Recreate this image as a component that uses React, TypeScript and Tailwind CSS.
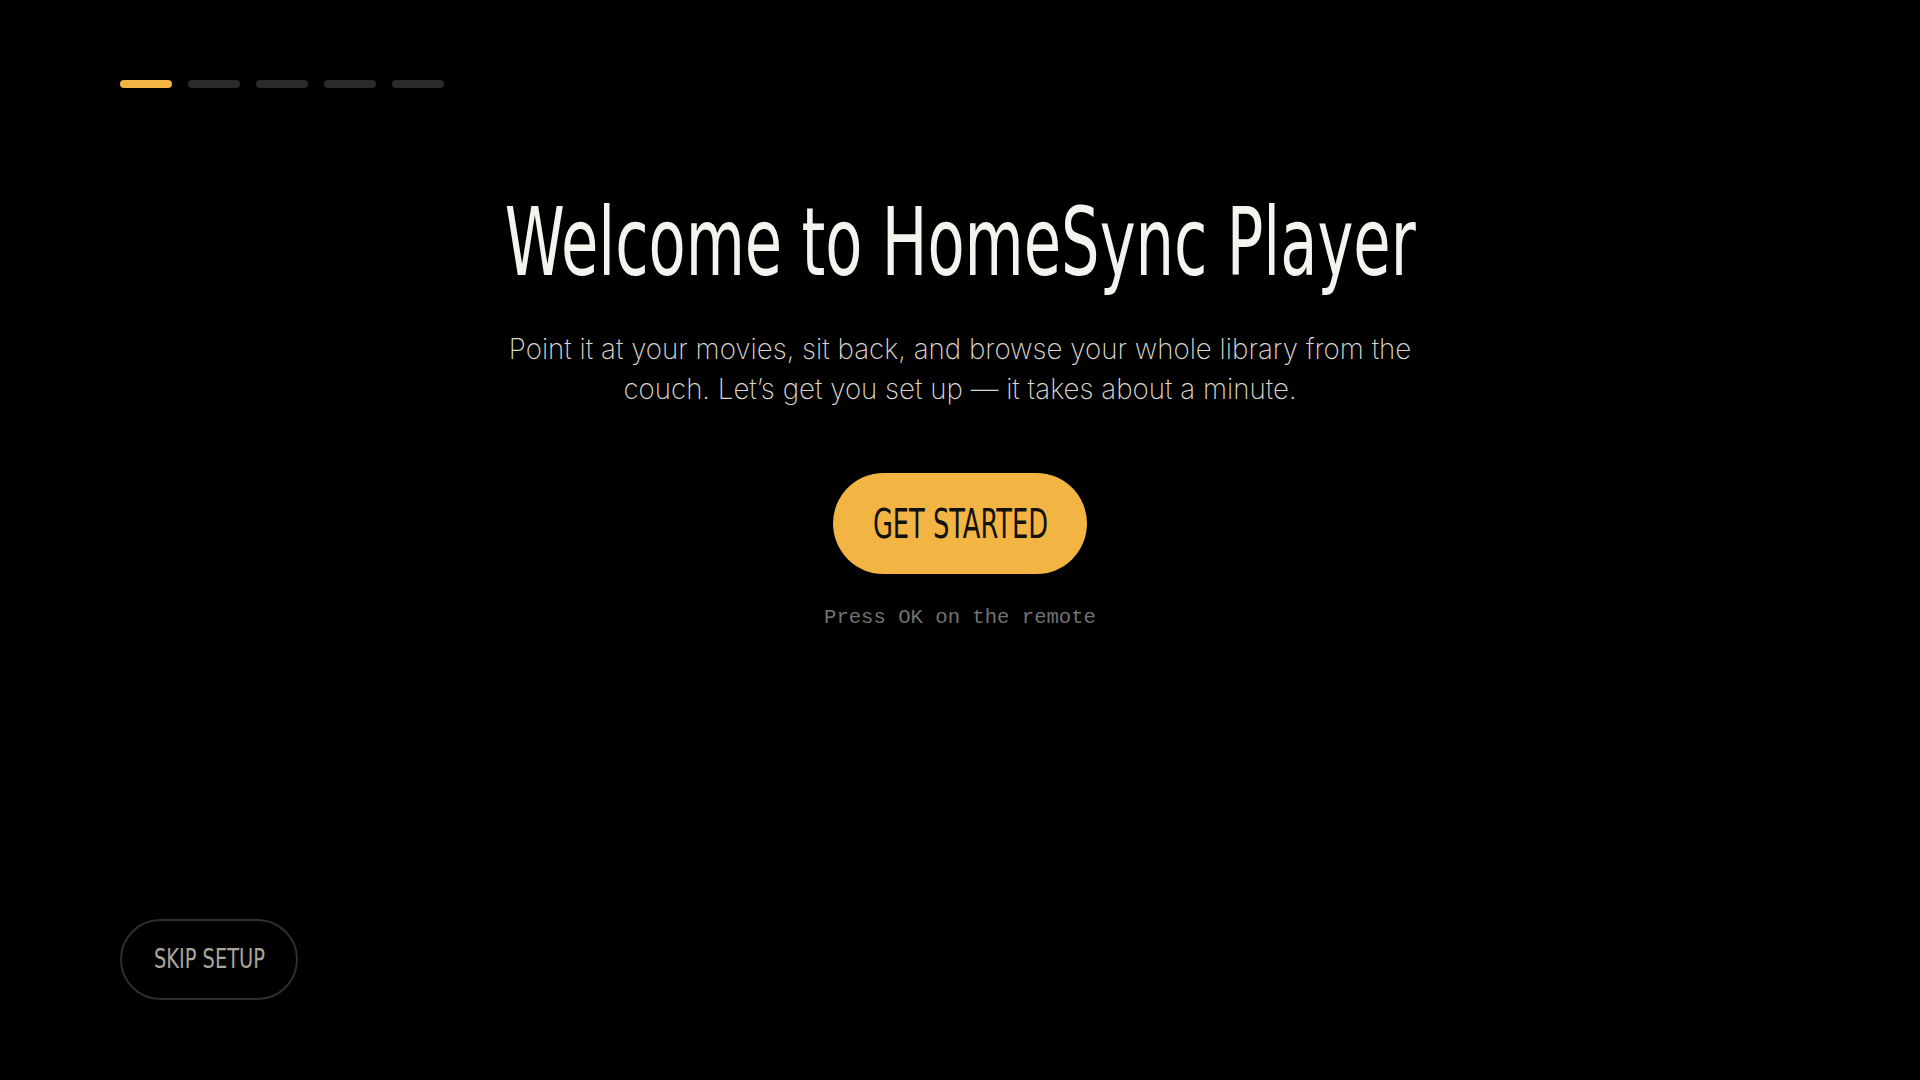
import React from "react";

const narrow = { fontFamily: '"Liberation Sans Narrow", "DejaVu Sans Condensed", "Liberation Sans", sans-serif' };

export default function App() {
  const steps = [true, false, false, false, false];
  return (
    <div className="w-full h-screen bg-black flex flex-col px-[120px] py-[80px] overflow-hidden">
      <div className="flex gap-4">
        {steps.map((a, i) => (
          <div key={i} className={`w-[52px] h-2 rounded-full ${a ? "bg-[#f2b544]" : "bg-[#2a2a2a]"}`} />
        ))}
      </div>
      <div className="flex-1 flex flex-col items-center mt-[110px]">
        <h1
          className="text-[94px] leading-[90px] text-[#f4f3ee] font-normal whitespace-nowrap"
          style={narrow}
        >
          <span className="inline-block scale-x-[0.718]">Welcome to HomeSync Player</span>
        </h1>
        <p
          className="mt-[41px] text-[27.7px] leading-[40px] font-extralight text-[#dad7ce] text-center"
          style={{ fontFamily: 'Inter, "Noto Sans", sans-serif' }}
        >
          Point it at your movies, sit back, and browse your whole library from the
          <br />
          couch. Let’s get you set up — it takes about a minute.
        </p>
        <button className="mt-16 w-[254px] h-[101px] rounded-full bg-[#f2b443] flex items-center justify-center">
          <span className="inline-block scale-x-[0.715] text-[40px] text-[#111111] whitespace-nowrap" style={narrow}>
            GET STARTED
          </span>
        </button>
        <div
          className="mt-[30px] text-[20.6px] leading-[28px] text-[#727272]"
          style={{ fontFamily: '"Liberation Mono", "DejaVu Sans Mono", monospace' }}
        >
          Press OK on the remote
        </div>
      </div>
      <div>
        <button className="w-[178px] h-[81px] rounded-full border-2 border-[#2e2e2e] flex items-center justify-center">
          <span className="inline-block scale-x-[0.8] text-[27px] text-[#aaa69c] whitespace-nowrap" style={narrow}>
            SKIP SETUP
          </span>
        </button>
      </div>
    </div>
  );
}
